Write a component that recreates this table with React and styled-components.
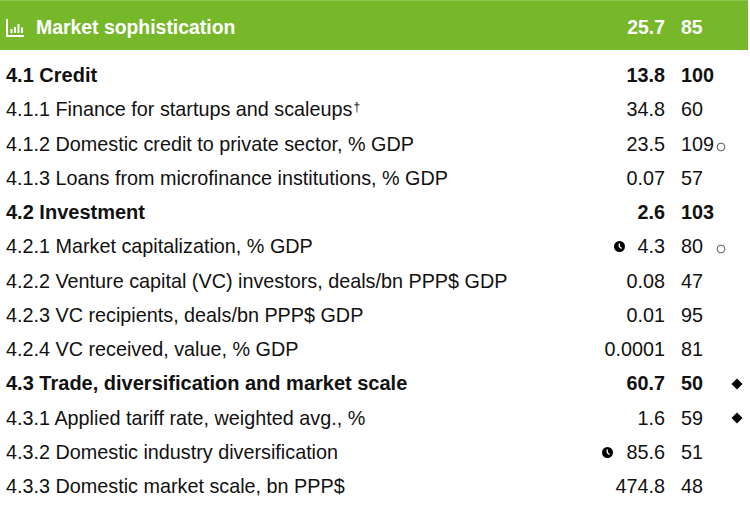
import React from "react";
import styled, { createGlobalStyle } from "styled-components";

const Global = createGlobalStyle`
  html, body { margin: 0; padding: 0; background: #fff; }
  body { font-family: "Liberation Sans", Arial, Helvetica, sans-serif; color: #111; }
`;

const Wrap = styled.div`
  width: 748px;
`;

const Header = styled.div`
  display: grid;
  grid-template-columns: 1fr auto 16px 35px 12px 20px;
  align-items: center;
  height: 50px;
  background: #76b82a;
  border-top: 1px solid #8fc64f;
  box-sizing: border-box;
  color: #fff;
  font-weight: 700;
  font-size: 19.4px;
  padding: 3px 0 0 6px;
`;

const HeaderTitle = styled.div`
  display: flex;
  align-items: center;
  gap: 11px;
`;

const Table = styled.div`
  display: grid;
  grid-template-columns: 1fr auto 16px 35px 12px 20px;
  grid-auto-rows: 34.25px;
  align-items: center;
  padding-top: 8.5px;
  padding-left: 6px;
  font-size: 19.8px;
`;

const Label = styled.div`
  font-weight: ${(p) => (p.$bold ? 700 : 400)};
  font-size: ${(p) => (p.$bold ? "20px" : "inherit")};
  white-space: nowrap;
`;

const Score = styled.div`
  display: flex;
  align-items: center;
  justify-content: flex-end;
  gap: 13px;
  font-weight: ${(p) => (p.$bold ? 700 : 400)};
`;

const Rank = styled.div`
  font-weight: ${(p) => (p.$bold ? 700 : 400)};
`;

const Cell = styled.div`
  display: flex;
  align-items: center;
  justify-content: ${(p) => p.$justify || "flex-start"};
  padding-top: ${(p) => p.$drop || 0}px;
  padding-right: ${(p) => p.$right || 0}px;
`;

const Sup = styled.sup`
  font-size: 12px;
  line-height: 0;
  vertical-align: 5px;
  margin-left: 1px;
`;

const ChartIcon = () => (
  <svg width="19" height="19" viewBox="0 0 19 19" fill="none" stroke="#fff" strokeWidth="2">
    <path d="M1 1 V18 H18" />
    <path d="M5.5 15 V11" />
    <path d="M9 15 V9" />
    <path d="M12.5 15 V6" />
    <path d="M16 15 V9.5" />
  </svg>
);

const Clock = () => (
  <svg width="11" height="11" viewBox="0 0 11 11">
    <circle cx="5.5" cy="5.5" r="5.5" fill="#000" />
    <path d="M5.3 2.6 V5.8 L7.6 7.6" stroke="#fff" strokeWidth="1.3" fill="none" />
  </svg>
);

const Ring = () => (
  <svg width="10" height="10" viewBox="0 0 10 10">
    <circle cx="5" cy="5" r="3.9" fill="none" stroke="#444" strokeWidth="0.9" />
  </svg>
);

const Diamond = () => (
  <svg width="12" height="12" viewBox="0 0 12 12">
    <path d="M6 0.5 L11.5 6 L6 11.5 L0.5 6 Z" fill="#000" />
  </svg>
);

const rows = [
  { l: "4.1 Credit", s: "13.8", r: "100", b: true },
  { l: "4.1.1 Finance for startups and scaleups", sup: true, s: "34.8", r: "60" },
  { l: "4.1.2 Domestic credit to private sector, % GDP", s: "23.5", r: "109", ring: true },
  { l: "4.1.3 Loans from microfinance institutions, % GDP", s: "0.07", r: "57" },
  { l: "4.2 Investment", s: "2.6", r: "103", b: true },
  { l: "4.2.1 Market capitalization, % GDP", s: "4.3", r: "80", clock: true, ring: true },
  { l: "4.2.2 Venture capital (VC) investors, deals/bn PPP$ GDP", s: "0.08", r: "47" },
  { l: "4.2.3 VC recipients, deals/bn PPP$ GDP", s: "0.01", r: "95" },
  { l: "4.2.4 VC received, value, % GDP", s: "0.0001", r: "81" },
  { l: "4.3 Trade, diversification and market scale", s: "60.7", r: "50", b: true, diamond: true },
  { l: "4.3.1 Applied tariff rate, weighted avg., %", s: "1.6", r: "59", diamond: true },
  { l: "4.3.2 Domestic industry diversification", s: "85.6", r: "51", clock: true },
  { l: "4.3.3 Domestic market scale, bn PPP$", s: "474.8", r: "48" },
];

export default function App() {
  return (
    <Wrap>
      <Global />
      <Header>
        <HeaderTitle>
          <ChartIcon />
          <span>Market sophistication</span>
        </HeaderTitle>
        <Score $bold>25.7</Score>
        <span />
        <Rank $bold>85</Rank>
        <span />
        <span />
      </Header>
      <Table>
        {rows.map((row) => (
          <React.Fragment key={row.l}>
            <Label $bold={row.b}>
              {row.l}
              {row.sup && <Sup>†</Sup>}
            </Label>
            <Score $bold={row.b}>
              {row.clock && <Clock />}
              <span>{row.s}</span>
            </Score>
            <span />
            <Rank $bold={row.b}>{row.r}</Rank>
            <Cell $drop={5}>{row.ring && <Ring />}</Cell>
            <Cell $justify="center" $right={2}>{row.diamond && <Diamond />}</Cell>
          </React.Fragment>
        ))}
      </Table>
    </Wrap>
  );
}
